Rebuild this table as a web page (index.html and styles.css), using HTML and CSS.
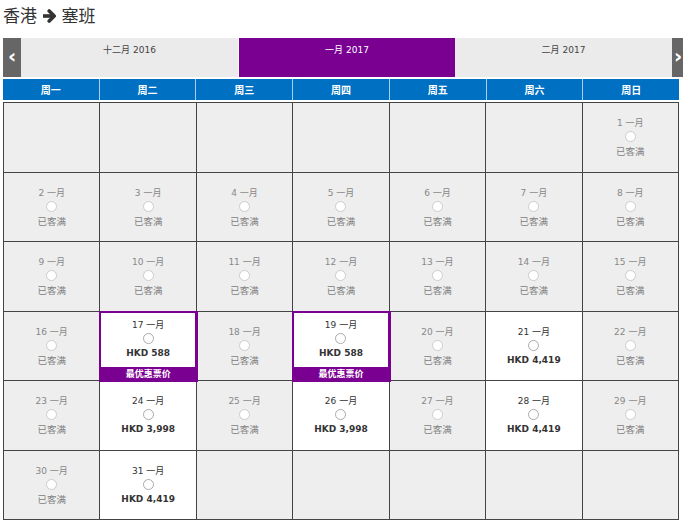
FILE: index.html
```html
<!DOCTYPE html>
<html lang="zh">
<head>
<meta charset="utf-8">
<link rel="stylesheet" href="styles.css">
</head>
<body>
<div class="page">
  <h1 class="title">香港 <svg class="arrow" width="15" height="14" viewBox="0 0 15 14"><path d="M1 7 H12" stroke="#333" stroke-width="3.6" fill="none"/><path d="M7.2 2 L12.2 7 L7.2 12" stroke="#333" stroke-width="3.6" fill="none" stroke-linecap="round" stroke-linejoin="round"/></svg> 塞班</h1>
  <div class="tabs">
    <div class="nav prev">‹</div>
    <div class="tab">十二月 2016</div>
    <div class="tab active">一月 2017</div>
    <div class="tab">二月 2017</div>
    <div class="nav next">›</div>
  </div>
  <div class="weekdays">
    <div>周一</div><div>周二</div><div>周三</div><div>周四</div><div>周五</div><div>周六</div><div>周日</div>
  </div>
  <div class="grid">
    <div class="cell"></div>
    <div class="cell"></div>
    <div class="cell"></div>
    <div class="cell"></div>
    <div class="cell"></div>
    <div class="cell"></div>
    <div class="cell full"><span class="d">1 一月</span><i class="radio"></i><span class="s">已客满</span></div>

    <div class="cell full"><span class="d">2 一月</span><i class="radio"></i><span class="s">已客满</span></div>
    <div class="cell full"><span class="d">3 一月</span><i class="radio"></i><span class="s">已客满</span></div>
    <div class="cell full"><span class="d">4 一月</span><i class="radio"></i><span class="s">已客满</span></div>
    <div class="cell full"><span class="d">5 一月</span><i class="radio"></i><span class="s">已客满</span></div>
    <div class="cell full"><span class="d">6 一月</span><i class="radio"></i><span class="s">已客满</span></div>
    <div class="cell full"><span class="d">7 一月</span><i class="radio"></i><span class="s">已客满</span></div>
    <div class="cell full"><span class="d">8 一月</span><i class="radio"></i><span class="s">已客满</span></div>

    <div class="cell full"><span class="d">9 一月</span><i class="radio"></i><span class="s">已客满</span></div>
    <div class="cell full"><span class="d">10 一月</span><i class="radio"></i><span class="s">已客满</span></div>
    <div class="cell full"><span class="d">11 一月</span><i class="radio"></i><span class="s">已客满</span></div>
    <div class="cell full"><span class="d">12 一月</span><i class="radio"></i><span class="s">已客满</span></div>
    <div class="cell full"><span class="d">13 一月</span><i class="radio"></i><span class="s">已客满</span></div>
    <div class="cell full"><span class="d">14 一月</span><i class="radio"></i><span class="s">已客满</span></div>
    <div class="cell full"><span class="d">15 一月</span><i class="radio"></i><span class="s">已客满</span></div>

    <div class="cell full"><span class="d">16 一月</span><i class="radio"></i><span class="s">已客满</span></div>
    <div class="cell open best"><div class="body"><span class="d">17 一月</span><i class="radio"></i><span class="p">HKD 588</span></div><div class="band">最优惠票价</div></div>
    <div class="cell full"><span class="d">18 一月</span><i class="radio"></i><span class="s">已客满</span></div>
    <div class="cell open best"><div class="body"><span class="d">19 一月</span><i class="radio"></i><span class="p">HKD 588</span></div><div class="band">最优惠票价</div></div>
    <div class="cell full"><span class="d">20 一月</span><i class="radio"></i><span class="s">已客满</span></div>
    <div class="cell open"><span class="d">21 一月</span><i class="radio"></i><span class="p">HKD 4,419</span></div>
    <div class="cell full"><span class="d">22 一月</span><i class="radio"></i><span class="s">已客满</span></div>

    <div class="cell full"><span class="d">23 一月</span><i class="radio"></i><span class="s">已客满</span></div>
    <div class="cell open"><span class="d">24 一月</span><i class="radio"></i><span class="p">HKD 3,998</span></div>
    <div class="cell full"><span class="d">25 一月</span><i class="radio"></i><span class="s">已客满</span></div>
    <div class="cell open"><span class="d">26 一月</span><i class="radio"></i><span class="p">HKD 3,998</span></div>
    <div class="cell full"><span class="d">27 一月</span><i class="radio"></i><span class="s">已客满</span></div>
    <div class="cell open"><span class="d">28 一月</span><i class="radio"></i><span class="p">HKD 4,419</span></div>
    <div class="cell full"><span class="d">29 一月</span><i class="radio"></i><span class="s">已客满</span></div>

    <div class="cell full"><span class="d">30 一月</span><i class="radio"></i><span class="s">已客满</span></div>
    <div class="cell open"><span class="d">31 一月</span><i class="radio"></i><span class="p">HKD 4,419</span></div>
    <div class="cell"></div>
    <div class="cell"></div>
    <div class="cell"></div>
    <div class="cell"></div>
    <div class="cell"></div>
  </div>
</div>
</body>
</html>
```
FILE: styles.css
```css
* { box-sizing: border-box; }
html, body { margin: 0; padding: 0; background: #fff; }
body {
  font-family: "DejaVu Sans", "Noto Sans CJK SC", sans-serif;
  color: #333;
  width: 683px;
  overflow: hidden;
}
.page { padding: 0 0 0 3px; }
.title {
  margin: 0 0 8px 0;
  height: 30px;
  line-height: 30px;
  font-size: 17px;
  font-weight: normal;
  font-family: "Noto Sans CJK SC", sans-serif;
  color: #333;
}
.title .arrow {
  display: inline-block;
  vertical-align: -1px;
  margin: 0 1px;
}
.tabs {
  display: flex;
  height: 39px;
  width: 680px;
}
.nav {
  width: 18px;
  background: #666;
  color: #fff;
  font-weight: bold;
  font-size: 20px;
  line-height: 36px;
  text-align: center;
  flex: none;
}
.nav.next { width: 11px; text-align: left; padding-left: 2px; }
.tab {
  width: 217px;
  flex: none;
  background: #ebebeb;
  color: #444;
  font-size: 9px;
  text-align: center;
  padding-top: 5px;
}
.tab.active {
  width: 216px;
  margin-left: 1px;
  background: #7a0092;
  color: #fff;
}
.weekdays {
  margin-top: 2px;
  width: 676px;
  height: 21px;
  display: grid;
  grid-template-columns: repeat(7, 1fr);
  gap: 1px;
  background: #a9d0ef;
}
.weekdays div {
  background: #0071c2;
  color: #fff;
  font-weight: bold;
  font-size: 10px;
  font-family: "Noto Sans CJK SC", sans-serif;
  text-align: center;
  line-height: 21px;
}
.grid {
  margin-top: 2px;
  width: 676px;
  height: 418px;
  display: grid;
  grid-template-columns: repeat(7, 1fr);
  grid-template-rows: repeat(6, 1fr);
  border-top: 1px solid #444;
  border-left: 1px solid #444;
  box-shadow: 0 2px 0 #bbb;
}
.cell {
  background: #eeeeee;
  border-right: 1px solid #444;
  border-bottom: 1px solid #444;
  display: flex;
  flex-direction: column;
  align-items: center;
  justify-content: center;
  font-size: 9px;
  line-height: 14px;
}
.cell.full { color: #888; }
.cell.open { background: #fff; color: #333; }
.cell .s { font-family: "Noto Sans CJK SC", sans-serif; font-size: 9.5px; color: #808080; }
.radio {
  display: block;
  width: 11px;
  height: 11px;
  border: 1px solid #aaa;
  border-radius: 50%;
  background: #fff;
  margin: 1px 0 2px;
}
.full .radio { border-color: #ccc; }
.p { font-weight: bold; font-size: 9px; color: #333; }
.cell.best {
  position: relative;
  z-index: 1;
  justify-content: stretch;
  align-items: stretch;
  box-shadow: 0 0 0 1px #7a0092, inset 0 0 0 1px #7a0092;
  border-color: #7a0092;
}
.best .body {
  flex: 1;
  display: flex;
  flex-direction: column;
  align-items: center;
  justify-content: center;
}
.best .band {
  height: 13px;
  background: #7a0092;
  color: #fff;
  font-weight: bold;
  font-family: "Noto Sans CJK SC", sans-serif;
  font-size: 9px;
  line-height: 13px;
  text-align: center;
}
```
